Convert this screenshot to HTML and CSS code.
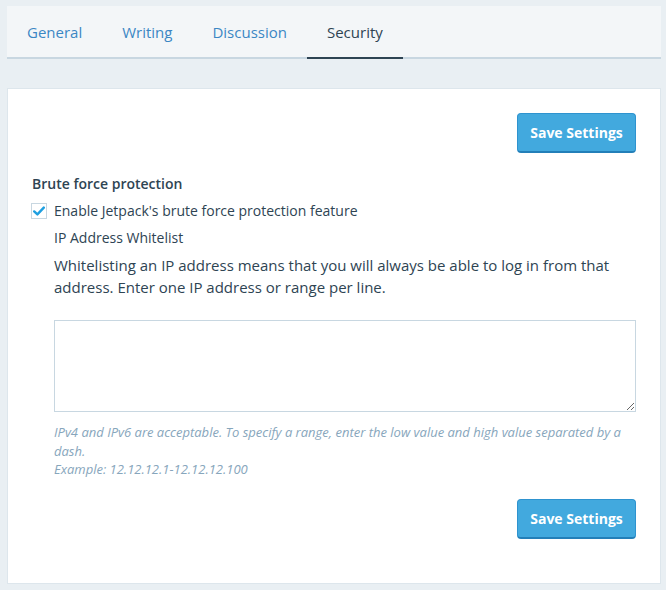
FILE: index.html
```html
<!DOCTYPE html>
<html lang="en">
<head>
    <meta charset="UTF-8" />
    <meta name="viewport" content="width=device-width, initial-scale=1.0" />
    <title>Settings - Security</title>
    <link rel="stylesheet" href="styles.css">
</head>
<body>
    <div class="page">
        <nav class="tabs">
            <a href="#" class="tab">General</a>
            <a href="#" class="tab">Writing</a>
            <a href="#" class="tab">Discussion</a>
            <a href="#" class="tab is-selected">Security</a>
        </nav>

        <form class="card">
            <div class="card-actions">
                <button type="button" class="save-btn">Save Settings</button>
            </div>

            <div class="settings-group">
                <h3 class="group-title">Brute force protection</h3>
                <label class="check-row">
                    <span class="check-box">
                        <svg width="12" height="10" viewBox="0 0 12 10">
                            <path d="M1.2 5.4 L4.4 8.4 L10.8 1.6" fill="none" stroke="#1e9fe0" stroke-width="2.4" stroke-linecap="round" stroke-linejoin="round"/>
                        </svg>
                    </span>
                    Enable Jetpack's brute force protection feature
                </label>

                <div class="whitelist">
                    <div class="field-label">IP Address Whitelist</div>
                    <p class="field-desc">Whitelisting an IP address means that you will always be able to log in from that address. Enter one IP address or range per line.</p>
                    <textarea class="field-input"></textarea>
                    <p class="field-hint">IPv4 and IPv6 are acceptable. To specify a range, enter the low value and high value separated by a dash.<br>Example: 12.12.12.1-12.12.12.100</p>
                </div>
            </div>

            <div class="card-actions bottom">
                <button type="button" class="save-btn">Save Settings</button>
            </div>
        </form>
    </div>
</body>
</html>
```

FILE: styles.css
```css
/* Global Styles */
body {
    margin: 0;
    background-color: #e9eff3;
    font-family: 'Open Sans', 'Liberation Sans', sans-serif;
    color: #2e4453;
}

.page {
    padding: 6px 5px 0 7px;
}

/* Section tabs */
.tabs {
    display: flex;
    background-color: #f3f6f8;
    border-bottom: 2px solid #c8d7e1;
    height: 51px;
}

.tab {
    display: block;
    padding: 0 20px;
    line-height: 52px;
    font-size: 15px;
    color: #3b87c4;
    text-decoration: none;
    margin-bottom: -2px;
    border-bottom: 2px solid transparent;
}

.tab.is-selected {
    color: #2e4453;
    border-bottom-color: #2e4453;
}

/* Card */
.card {
    margin-top: 29px;
    background-color: #fff;
    border: 1px solid #dde6ec;
    padding: 24px;
}

.card-actions {
    display: flex;
    justify-content: flex-end;
}

.card-actions.bottom {
    margin-top: 20px;
    margin-bottom: 20px;
}

.save-btn {
    font-family: 'Open Sans', 'Liberation Sans', sans-serif;
    font-size: 14px;
    font-weight: 700;
    color: #fff;
    background-color: #42a9de;
    border: 1px solid #2e93cf;
    border-bottom: 2px solid #237fb8;
    border-radius: 4px;
    height: 40px;
    width: 119px;
    padding: 0;
    white-space: nowrap;
    cursor: pointer;
}

.settings-group {
    margin-top: 21px;
    font-size: 14px;
}

.group-title {
    margin: 0;
    font-size: 14px;
    font-weight: 600;
    line-height: 20px;
}

.check-row {
    display: flex;
    align-items: center;
    margin-top: 7px;
    line-height: 20px;
}

.check-box {
    display: flex;
    align-items: center;
    justify-content: center;
    width: 14px;
    height: 14px;
    border: 1px solid #c8d7e1;
    margin-right: 7px;
    margin-left: -1px;
}

.whitelist {
    padding-left: 22px;
}

.field-label {
    margin-top: 7px;
    line-height: 20px;
}

.field-desc {
    margin: 6px 0 0;
    font-size: 15px;
    line-height: 22px;
}

.field-input {
    display: block;
    box-sizing: border-box;
    width: 100%;
    height: 92px;
    margin-top: 22px;
    border: 1px solid #c8d7e1;
    border-radius: 0;
    outline: none;
    font-family: inherit;
    font-size: 14px;
}

.field-hint {
    margin: 11px 0 0;
    font-size: 13px;
    font-style: italic;
    line-height: 18.5px;
    color: #87a6bc;
}
```
